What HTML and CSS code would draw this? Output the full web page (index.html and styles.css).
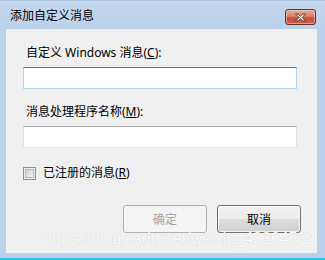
FILE: index.html
```html
<!DOCTYPE html>
<html lang="zh-CN">
<head>
    <meta charset="UTF-8">
    <title>添加自定义消息</title>
    <link rel="stylesheet" href="styles.css">
</head>
<body>
    <div class="window">
        <div class="titlebar">
            <span class="title">添加自定义消息</span>
            <button class="close" type="button" aria-label="关闭">
                <svg width="15" height="9" viewBox="0 0 15 9">
                    <path d="M2.5 1 L5 1 L7.5 3 L10 1 L12.5 1 L9 4.5 L12.5 8 L10 8 L7.5 6 L5 8 L2.5 8 L6 4.5 Z"
                          fill="#fff" stroke="#5b2a25" stroke-width="0.9" stroke-linejoin="round"/>
                </svg>
            </button>
        </div>

        <div class="client">
            <label class="caption">自定义 Windows 消息(<u>C</u>):</label>
            <input class="textbox focused" type="text">

            <label class="caption second">消息处理程序名称(<u>M</u>):</label>
            <input class="textbox" type="text">

            <div class="check-row">
                <span class="checkbox"><span class="check-inner"></span></span>
                <span class="check-label">已注册的消息(<u>R</u>)</span>
            </div>

            <div class="buttons">
                <button class="btn" type="button" disabled>确定</button>
                <button class="btn default" type="button">取消</button>
            </div>

            <div class="watermark">https://blog.csdn.net/weixin_43264512</div>
        </div>
    </div>
</body>
</html>
```

FILE: styles.css
```css
* {
    margin: 0;
    padding: 0;
    box-sizing: border-box;
}

body {
    width: 325px;
    height: 260px;
    overflow: hidden;
    background: #b9d1ea;
    font-family: "Noto Sans", "Noto Sans CJK SC", sans-serif;
    font-size: 12px;
    color: #000;
}

.window {
    height: 260px;
    padding: 0 8px 0 6px;
    background: linear-gradient(180deg, #c4d8ee 0%, #b9d1ea 30px, #b9d1ea 100%);
    border-top: 1px solid #aac2dc;
    border-bottom: 2px solid #2bc3ea;
}

.titlebar {
    height: 28px;
    display: flex;
    align-items: center;
    justify-content: space-between;
    padding: 0 1px 0 4px;
}

.title {
    line-height: 16px;
    margin-top: 2px;
}

.close {
    width: 31px;
    height: 16px;
    margin-top: 4px;
    border: 1px solid #6b2b26;
    border-radius: 3px;
    background: linear-gradient(180deg, #e9a999 0%, #d7826f 45%, #c45138 55%, #c8604a 100%);
    box-shadow: inset 0 0 0 1px rgba(255, 220, 210, 0.5);
    display: flex;
    align-items: center;
    justify-content: center;
}

.close svg {
    display: block;
}

.client {
    position: relative;
    height: 224px;
    background: #f0f0f0;
    padding: 16px 0 0 17px;
}

.caption {
    display: block;
    line-height: 16px;
    padding-left: 3px;
}

.textbox {
    display: block;
    width: 274px;
    height: 22px;
    margin-top: 6px;
    background: #fff;
    border: 1px solid #dbdfe6;
    border-top-color: #abadb3;
    border-left-color: #e2e3ea;
    border-right-color: #e2e3ea;
    border-bottom-color: #e3e9ef;
    outline: none;
}

.textbox.focused {
    border-top-color: #3d7bad;
    border-left-color: #b5cfe7;
    border-right-color: #b5cfe7;
    border-bottom-color: #b7d9ed;
}

.textbox + .caption {
    margin-top: 15px;
}

.check-row {
    display: flex;
    align-items: center;
    margin-top: 18px;
    height: 14px;
}

.checkbox {
    width: 13px;
    height: 13px;
    border: 1px solid #8e8f8f;
    background: #f4f4f4;
    padding: 1px;
}

.check-inner {
    display: block;
    width: 9px;
    height: 9px;
    border: 1px solid #b3b8bd;
    background: linear-gradient(135deg, #c9ccd1 0%, #e4e6e9 60%, #f5f5f5 100%);
}

.check-label {
    margin-left: 7px;
    line-height: 16px;
}

.buttons {
    display: flex;
    gap: 10px;
    margin-top: 25px;
    padding-left: 100px;
}

.btn {
    width: 84px;
    height: 28px;
    border-radius: 3px;
    font-family: "Noto Sans", "Noto Sans CJK SC", sans-serif;
    font-size: 12px;
}

.btn:disabled {
    border: 1px solid #adb2b5;
    background: #f4f4f4;
    color: #a3a3a3;
}

.btn.default {
    border: 1px solid #707070;
    color: #000;
    background: linear-gradient(180deg, #f2f2f2 0%, #ebebeb 50%, #dddddd 50%, #cfcfcf 100%);
    box-shadow: inset 0 0 0 1px rgba(255, 255, 255, 0.7);
}

/* csdn watermark laid over the dialog */
.watermark {
    position: absolute;
    left: 37px;
    top: 201px;
    font-family: "Liberation Sans", Arial, sans-serif;
    font-size: 16px;
    line-height: 18px;
    color: #fbfbfb;
    text-shadow: 0 0 1px rgba(0, 0, 0, 0.18);
    white-space: nowrap;
}
```
